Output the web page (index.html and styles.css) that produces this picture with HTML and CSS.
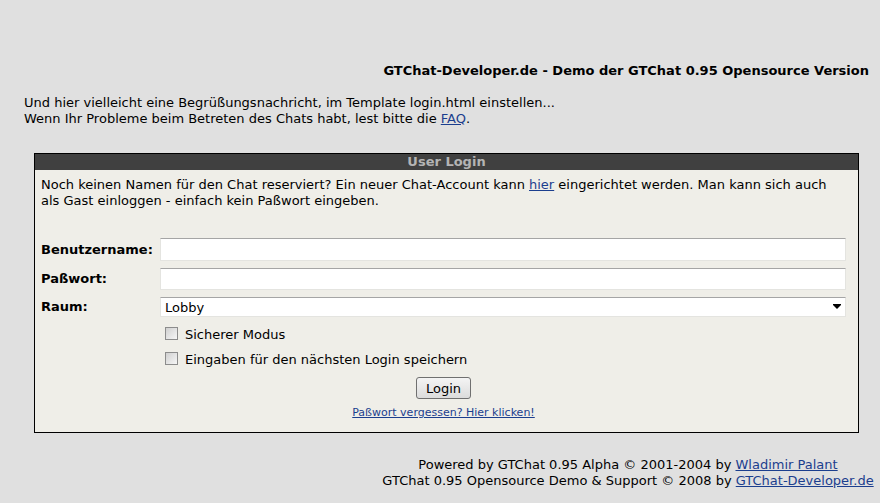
FILE: index.html
```html
<!DOCTYPE html>
<html lang="de">
<head>
<meta charset="utf-8">
<title>GTChat Login</title>
<link rel="stylesheet" href="styles.css">
</head>
<body>
<div class="title">GTChat-Developer.de - Demo der GTChat 0.95 Opensource Version</div>
<div class="welcome">
  Und hier vielleicht eine Begrüßungsnachricht, im Template login.html einstellen...<br>
  Wenn Ihr Probleme beim Betreten des Chats habt, lest bitte die <a href="#">FAQ</a>.
</div>
<div class="box">
  <div class="box-head">User Login</div>
  <div class="box-body">
    <p class="intro">Noch keinen Namen für den Chat reserviert? Ein neuer Chat-Account kann <a href="#">hier</a> eingerichtet werden. Man kann sich auch als Gast einloggen - einfach kein Paßwort eingeben.</p>
    <form class="form">
      <label class="lbl">Benutzername:</label>
      <input class="field f1" type="text">
      <label class="lbl">Paßwort:</label>
      <input class="field f2" type="password">
      <label class="lbl">Raum:</label>
      <div class="selwrap">
        <select class="field f3"><option>Lobby</option></select>
        <span class="arrow"></span>
      </div>
      <div class="check c1"><input type="checkbox" class="cb"><span>Sicherer Modus</span></div>
      <div class="check c2"><input type="checkbox" class="cb"><span>Eingaben für den nächsten Login speichern</span></div>
      <div class="actions">
        <button type="button" class="btn">Login</button>
        <a href="#" class="forgot">Paßwort vergessen? Hier klicken!</a>
      </div>
    </form>
  </div>
</div>
<div class="footer-wrap">
  <div class="footer">
    Powered by GTChat 0.95 Alpha © 2001-2004 by <a href="#">Wladimir Palant</a><br>
    GTChat 0.95 Opensource Demo &amp; Support © 2008 by <a href="#">GTChat-Developer.de</a>
  </div>
</div>
</body>
</html>
```
FILE: styles.css
```css
html, body {
  margin: 0;
  padding: 0;
  background: #e0e0e0;
  width: 880px;
  overflow: hidden;
}
body {
  font-family: "DejaVu Sans", Verdana, sans-serif;
  font-size: 13px;
  line-height: 16px;
  color: #000;
}
a { color: #1b3e8e; text-decoration: underline; }

.title {
  margin-top: 63px;
  text-align: right;
  padding-right: 11px;
  font-weight: bold;
  white-space: nowrap;
}
.welcome {
  margin-top: 16px;
  padding-left: 24px;
}
.box {
  margin: 26px 0 0 34px;
  width: 823px;
  border: 1px solid #000;
  background: #efeee8;
}
.box-head {
  background: #404040;
  color: #b4b4b4;
  font-weight: bold;
  text-align: center;
  height: 16px;
  line-height: 16px;
}
.box-body {
  padding: 7px 12px 11px 6px;
}
.intro { margin: 0; }

.form {
  margin-top: 29px;
  display: grid;
  grid-template-columns: 119px 1fr;
  align-items: center;
}
.lbl {
  font-weight: bold;
  white-space: nowrap;
}
.field {
  box-sizing: border-box;
  width: 100%;
  margin: 0;
  background: #fff;
  border: 1px solid #e4e4e0;
  border-top-color: #a5a5a5;
  font-family: inherit;
  font-size: 13px;
  padding: 0 4px;
  outline: none;
}
.f1 { height: 23px; }
.f2 { height: 22px; margin-top: 7px; }
.selwrap { position: relative; margin-top: 7px; }
.f3 {
  height: 20px;
  appearance: none;
  -webkit-appearance: none;
  border-radius: 0;
  color: #000;
}
.lbl:nth-of-type(2), .lbl:nth-of-type(3) { margin-top: 7px; }
.arrow {
  position: absolute;
  right: 5px;
  top: 8px;
  width: 0;
  height: 0;
  border-left: 4px solid transparent;
  border-right: 4px solid transparent;
  border-top: 4px solid #000;
}
.arrow::before {
  content: "";
  position: absolute;
  left: -4px;
  top: -5px;
  width: 8px;
  height: 1px;
  background: #000;
}
.check {
  grid-column: 2;
  display: flex;
  align-items: center;
  padding-left: 5px;
  height: 16px;
}
.c1 { margin-top: 10px; }
.c2 { margin-top: 9px; }
.cb {
  appearance: none;
  -webkit-appearance: none;
  width: 13px;
  height: 13px;
  margin: 0 7px 0 0;
  border: 1px solid #8c8c8c;
  background: linear-gradient(135deg, #d0d0d0, #f6f6f6);
  box-sizing: border-box;
  position: relative;
  top: -2px;
}
.actions {
  grid-column: 1 / span 2;
  display: flex;
  flex-direction: column;
  align-items: center;
  margin-top: 9px;
}
.btn {
  width: 55px;
  height: 22px;
  border: 1px solid #707070;
  border-radius: 3px;
  background: linear-gradient(#f4f4f4, #dcdcdc);
  font-family: inherit;
  font-size: 13px;
  color: #000;
  padding: 0;
}
.forgot {
  margin-top: 6px;
  font-size: 11px;
  line-height: 16px;
}
.footer-wrap {
  display: flex;
  justify-content: flex-end;
  margin-top: 24px;
}
.footer {
  width: 504px;
  text-align: center;
  white-space: nowrap;
}
```
